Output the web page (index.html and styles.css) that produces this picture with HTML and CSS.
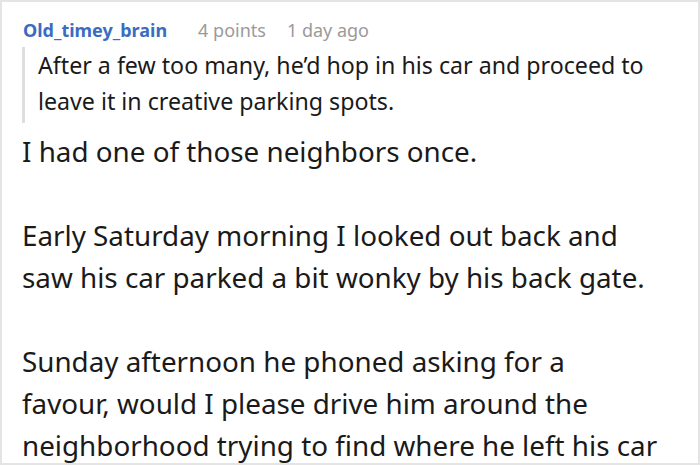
FILE: index.html
```html
<!DOCTYPE html>
<html lang="en">
<head>
<meta charset="utf-8">
<link rel="stylesheet" href="styles.css">
</head>
<body>
<div class="frame">
  <div class="comment">
    <div class="meta">
      <a class="author">Old_timey_brain</a>
      <span class="score">4 points</span>
      <span class="time">1 day ago</span>
    </div>
    <blockquote class="quote">
      <p>After a few too many, he’d hop in his car and proceed to leave it in creative parking spots.</p>
    </blockquote>
    <div class="body">
      <p>I had one of those neighbors once.</p>
      <p>Early Saturday morning I looked out back and saw his car parked a bit wonky by his back gate.</p>
      <p>Sunday afternoon he phoned asking for a<br>favour, would I please drive him around the neighborhood trying to find where he left his car</p>
    </div>
  </div>
</div>
</body>
</html>
```

FILE: styles.css
```css
html, body {
  margin: 0;
  padding: 0;
  background: #ffffff;
}

.frame {
  width: 700px;
  height: 465px;
  box-sizing: border-box;
  border: 2px solid #e4e4e4;
  overflow: hidden;
  background: #ffffff;
}

.comment {
  padding: 0 28px 0 20px;
  font-family: "Noto Sans", "Open Sans", sans-serif;
  color: #1a1a1a;
}

.meta {
  display: flex;
  align-items: baseline;
  font-size: 18px;
  line-height: 22px;
  padding-top: 17px;
}

.author {
  color: #3b6cc0;
  font-weight: 700;
  margin-right: 31px;
  padding-left: 1px;
}

.score,
.time {
  color: #9a9a9a;
}

.score {
  margin-right: 21px;
}

.quote {
  margin: 6px 0 0 0;
  padding: 0 0 4px 13px;
  border-left: 3px solid #dedede;
}

.quote p {
  margin: 0;
  font-size: 23.2px;
  line-height: 36px;
}

.body {
  margin-top: 7px;
}

.body p {
  margin: 0 0 42px 0;
  font-size: 27.8px;
  line-height: 42px;
}
```
